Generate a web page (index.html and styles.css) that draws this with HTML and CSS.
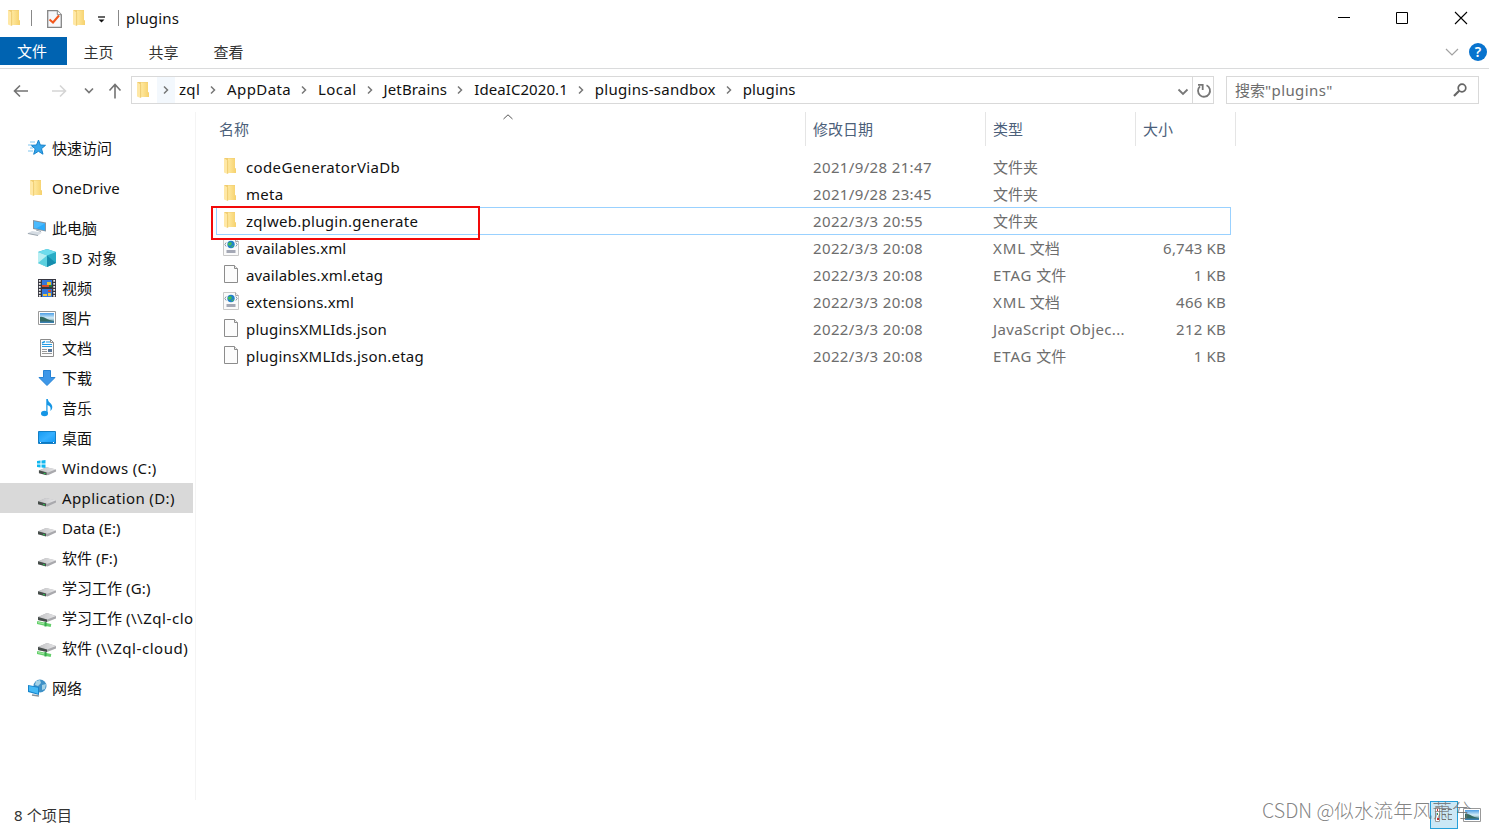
FILE: index.html
```html
<!DOCTYPE html>
<html lang="zh-CN">
<head>
<meta charset="utf-8">
<title>plugins</title>
<link rel="stylesheet" href="styles.css">
</head>
<body>
<svg class="defs" aria-hidden="true">
  <defs>
    <linearGradient id="gold" x1="0" y1="0" x2="1" y2="0"><stop offset="0" stop-color="#ffe9a0"/><stop offset="1" stop-color="#f6d16c"/></linearGradient>
    <linearGradient id="metal" x1="0" y1="0" x2="1" y2="0"><stop offset="0" stop-color="#c4c4c6"/><stop offset="1" stop-color="#e3e3e5"/></linearGradient>
    <linearGradient id="blue" x1="0" y1="0" x2="1" y2="1"><stop offset="0" stop-color="#159bf3"/><stop offset=".5" stop-color="#37b0ff"/><stop offset="1" stop-color="#0c98f6"/></linearGradient>
    <linearGradient id="sky" x1="0" y1="0" x2="0" y2="1"><stop offset="0" stop-color="#4b9ee5"/><stop offset=".5" stop-color="#d5edf7"/><stop offset="1" stop-color="#2c6d83"/></linearGradient>
  </defs>
  <symbol id="folder" viewBox="0 0 14 18"><path d="M1 1h11v10l1 1v4H3z" fill="#f0cc70"/><path d="M5 1.500h7v9.500l1 1v4H5z" fill="url(#gold)"/><path d="M1 1l3.500 2.500V17L1 15.500z" fill="#ffe8a6"/><path d="M4.700 3.500V17" stroke="#eac667" stroke-width=".7"/></symbol>
  <symbol id="chev" viewBox="0 0 8 10"><path d="M2 1.500L5.500 5 2 8.500" fill="none" stroke="#777" stroke-width="1.500"/></symbol>
  <symbol id="drive" viewBox="0 0 20 12"><path d="M1 6.500L9 3l10 2.500v2l-8.500 4L1 9z" fill="#a9a9ad"/><path d="M1 6.300L9 3l10 2.200-8.500 3.500z" fill="url(#metal)"/><path d="M1 6.300l8 2.200v3L1 9.300z" fill="#454c49"/><path d="M6 9.500l2 .5" stroke="#30c854" stroke-width="1.200"/></symbol>
  <symbol id="netdrive" viewBox="0 0 20 16"><path d="M1 5L10 1l9 3v2.500L10 10 1 8z" fill="#a9a9ad"/><path d="M1 5L10 1l9 3-9 3.500z" fill="url(#metal)"/><path d="M1 5l9 2.500V10L1 8z" fill="#454c49"/><path d="M0 10.500l9 2 5 1" stroke="#64cf6b" stroke-width="3" fill="none"/><path d="M1 10.500l7 1.500" stroke="#a4eaa4"/><path d="M8.500 10v4.500" stroke="#36a94b" stroke-width="2"/></symbol>
  <symbol id="page" viewBox="0 0 16 18"><path d="M1.500.5h10l3 3v14h-13z" fill="#fcfcfc" stroke="#8c8c8c"/><path d="M11.500.5v3h3" fill="#eee" stroke="#8c8c8c"/></symbol>
  <symbol id="xml" viewBox="0 0 16 18"><path d="M.5.5h12l3 3v14H.5z" fill="#fafafa" stroke="#c8c8c8"/><path d="M12.500.5v3h3" fill="#eee" stroke="#aaa"/><circle cx="8" cy="6.500" r="3.700" fill="#2281ca"/><path d="M5 5l3-1 1 2-2 2-2-1zm4 3l2-1-1 2-2 .5z" fill="#44bd55"/><path d="M3.200 4.500L1.800 6.500l1.400 2m9.600-4l1.400 2-1.400 2" fill="none" stroke="#8a9dad"/><path d="M3.500 12h9v3h-9z" fill="#a4a8b5"/></symbol>
  <symbol id="picture" viewBox="0 0 18 14"><path d="M.5.5h17v13H.5z" fill="#fff" stroke="#999"/><path d="M2 2h14v10H2z" fill="url(#sky)"/><path d="M2 6c4-1 6 3 14 4v2H2z" fill="#346b62"/><path d="M2 10.500h14V12H2z" fill="#3a80b1"/></symbol>
</svg>

<div class="window">
  <header class="titlebar">
    <div class="quick">
      <svg class="i-folder"><use href="#folder"/></svg>
      <span class="rule q1"></span>
      <svg class="i-check" viewBox="0 0 15 18"><path d="M.7.7h9.600l4 4v12.600H.7z" fill="#f6f7fa" stroke="#858585" stroke-width="1.300"/><path d="M10.300.7v4h4" fill="#fff" stroke="#858585"/><path d="M2.500 9.500l3.500 3 6-7" fill="none" stroke="#f2571d" stroke-width="2"/></svg>
      <svg class="i-folder q2"><use href="#folder"/></svg>
      <svg class="i-more" viewBox="0 0 8 8"><path d="M0 1h7" stroke="#111" stroke-width="1.300"/><path d="M.5 3.500h6l-3 3z" fill="#111"/></svg>
      <span class="rule q3"></span>
      <span class="title">plugins</span>
    </div>
    <div class="controls">
      <svg viewBox="0 0 14 14"><path d="M2 6.500h12" stroke="#000"/></svg>
      <svg viewBox="0 0 14 14"><path d="M1.500 1.500h11v11h-11z" fill="none" stroke="#000"/></svg>
      <svg viewBox="0 0 14 14"><path d="M1 1l12 12M13 1L1 13" stroke="#000" stroke-width="1.100"/></svg>
    </div>
  </header>

  <nav class="tabs">
    <span class="tab file">文件</span><span class="tab">主页</span><span class="tab">共享</span><span class="tab">查看</span>
    <svg class="i-expand" viewBox="0 0 14 8"><path d="M1 1l6 6 6-6" fill="none" stroke="#a2a2a2" stroke-width="1.200"/></svg>
    <span class="help">?</span>
  </nav>

  <div class="addressbar">
    <div class="navbtns">
      <svg class="n1" viewBox="0 0 16 14"><path d="M15 7H1.500M7 1.500L1.500 7 7 12.500" fill="none" stroke="#737373" stroke-width="1.600"/></svg>
      <svg class="n2" viewBox="0 0 16 14"><path d="M1 7h13.500M9 1.500L14.500 7 9 12.500" fill="none" stroke="#d5d5d5" stroke-width="1.600"/></svg>
      <svg class="n3" viewBox="0 0 10 8"><path d="M1 1.500l4 4 4-4" fill="none" stroke="#777" stroke-width="1.700"/></svg>
      <svg class="n4" viewBox="0 0 14 16"><path d="M7 15.500V1.500M1.500 7.500L7 1.500l5.500 6" fill="none" stroke="#737373" stroke-width="1.600"/></svg>
    </div>
    <div class="path">
      <svg class="i-folder"><use href="#folder"/></svg>
      <span class="hot"><svg class="chev"><use href="#chev"/></svg></span>
      <span class="crumb c1">zql</span><svg class="chev"><use href="#chev"/></svg>
      <span class="crumb c2">AppData</span><svg class="chev"><use href="#chev"/></svg>
      <span class="crumb c3">Local</span><svg class="chev"><use href="#chev"/></svg>
      <span class="crumb c4">JetBrains</span><svg class="chev"><use href="#chev"/></svg>
      <span class="crumb c5">IdeaIC2020.1</span><svg class="chev"><use href="#chev"/></svg>
      <span class="crumb c6">plugins-sandbox</span><svg class="chev"><use href="#chev"/></svg>
      <span class="crumb c7">plugins</span>
      <svg class="i-drop" viewBox="0 0 12 8"><path d="M1.500 1.500L6 6l4.500-4.500" fill="none" stroke="#777" stroke-width="1.800"/></svg>
      <span class="refresh"><svg viewBox="0 0 16 16"><path d="M10.500 2.300A6 6 0 1 1 4 3.300M2 1.900h4.700V7" fill="none" stroke="#777" stroke-width="1.800"/></svg></span>
    </div>
    <div class="search"><span>搜索<span class="query">"plugins"</span></span>
      <svg viewBox="0 0 14 14"><circle cx="9" cy="5" r="3.800" fill="none" stroke="#666" stroke-width="1.700"/><path d="M6.200 7.800L1 13" stroke="#666" stroke-width="2.200"/></svg>
    </div>
  </div>

  <main class="body">
    <aside class="side">
      <div class="node root"><svg viewBox="0 0 20 18"><path d="M11.500 1l1.800 5 5.200.3-4 3.400 1.500 5.500-4.600-2.900-4.700 3 1.500-5.500L4 6.300 9.500 6z" fill="#36a5ea" stroke="#1683cc"/><path d="M3 3h5M1 6h4M3 9h3M1 12h5" stroke="#7fc5ef"/></svg>快速访问</div>
      <div class="node root gap"><svg viewBox="0 0 20 18"><use href="#folder" x="2" width="14" height="18"/></svg><span class="one">OneDrive</span></div>
      <div class="node root gap"><svg viewBox="0 0 20 18"><path d="M6 1l13 2.500v9L6 10z" fill="#8794a0"/><path d="M7 2.200l11 2.200v7L7 9z" fill="#2cabfb"/><path d="M7 2.200l11 2.200-9 5L7 9z" fill="#61c5ff" opacity=".6"/><path d="M0 14.500L5 12l10 1.500-4 3z" fill="#d5dce3"/><path d="M1 14.500l10 2M9 11l5 1.500" stroke="#9ba5ae"/></svg>此电脑</div>
      <div class="node"><svg viewBox="0 0 20 18"><path d="M10 0l9 3v11l-9 4-9-4V3z" fill="#29acc5"/><path d="M1 3l9-3 9 3-9 3.500z" fill="#6ddced"/><path d="M1 3l9 3.500V18l-9-4z" fill="#b8eff3"/><path d="M1 14l9-7.500V18z" fill="#5bd0df"/><path d="M19 14l-9-7.500V18z" fill="#168dad"/></svg><span><span class="wide">3D</span> 对象</span></div>
      <div class="node"><svg viewBox="0 0 20 18"><path d="M1 0h18v18H1z" fill="#363640"/><path d="M5 1h10v7H5zm0 9h10v8H5z" fill="#3478dc"/><path d="M2.800 1v17M17.200 1v17" stroke="#eee" stroke-width="1.800" stroke-dasharray="1.700 1.300"/><path d="M10 3h4v4h-4z" fill="#e7c52d"/><path d="M5 6h5v2H5zm5 0h2v2h-2zM11 11h3v2h-3z" fill="#d64d28"/><path d="M6 15h4v2H6zm5-1h3v3h-3z" fill="#f0c63d"/><path d="M12 6h3v2h-3z" fill="#1e7a3b"/></svg>视频</div>
      <div class="node"><svg viewBox="0 0 20 18"><use href="#picture" x="1" y="2" width="18" height="14"/></svg>图片</div>
      <div class="node"><svg viewBox="0 0 20 18"><path d="M3.500.5h10l3 3v14h-13z" fill="#fcfcfc" stroke="#8c8c8c"/><path d="M13.500.5v3h3" fill="none" stroke="#8c8c8c"/><path d="M9 3h4M5 5.500h10M5 7.500h10" stroke="#259de5"/><path d="M5 4l3-1.500" stroke="#259de5" stroke-width="1.500"/><path d="M5 10.500h5M5 12.500h5M5 14.500h10" stroke="#999"/><path d="M11 10h4v3h-4z" fill="#587698"/></svg>文档</div>
      <div class="node"><svg viewBox="0 0 20 18"><path d="M6.500 1.500h7v7h4.500l-8 8-8-8h4.500z" fill="#3d97e8" stroke="#2683d5"/></svg>下载</div>
      <div class="node"><svg viewBox="0 0 20 18"><ellipse cx="7.500" cy="14.500" rx="3.500" ry="2.700" fill="#1596e5"/><path d="M9.300 14V0h1.500c.5 4 4.500 4 4.500 8 0 2-1 3-2 4 1-4-.5-5-2.800-6v8z" fill="#1596e5"/></svg>音乐</div>
      <div class="node"><svg viewBox="0 0 20 18"><path d="M1.500 2.500h17v12h-17z" fill="url(#blue)" stroke="#147fc5"/><path d="M2 13.500h16" stroke="#0b79c4"/><path d="M3 13.500h1m12 0h1" stroke="#fff"/></svg>桌面</div>
      <div class="node"><svg viewBox="0 0 20 18"><use href="#drive" x="1" y="5" width="19" height="12"/><path d="M0 2l3.500-.5v3H0zm4.500-.6l4-.4v3.500h-4zM0 5.500h3.500v3L0 8zm4.500 0h4V9l-4-.5z" fill="#10b7ef"/></svg><span class="win">Windows (C:)</span></div>
      <div class="node on"><svg viewBox="0 0 20 18"><use href="#drive" x="0" y="6" width="20" height="12"/></svg><span class="app">Application (D:)</span></div>
      <div class="node"><svg viewBox="0 0 20 18"><use href="#drive" x="0" y="6" width="20" height="12"/></svg><span>Data (E:)</span></div>
      <div class="node"><svg viewBox="0 0 20 18"><use href="#drive" x="0" y="6" width="20" height="12"/></svg><span>软件 <span class="drv">(F:)</span></span></div>
      <div class="node"><svg viewBox="0 0 20 18"><use href="#drive" x="0" y="6" width="20" height="12"/></svg><span>学习工作 <span class="drv">(G:)</span></span></div>
      <div class="node"><svg viewBox="0 0 20 18"><use href="#netdrive" x="0" y="3" width="20" height="16"/></svg><span>学习工作 <span class="net">(\\Zql-clo</span></span></div>
      <div class="node"><svg viewBox="0 0 20 18"><use href="#netdrive" x="0" y="3" width="20" height="16"/></svg><span>软件 <span class="net">(\\Zql-cloud)</span></span></div>
      <div class="node root gap"><svg viewBox="0 0 20 18"><circle cx="13" cy="7" r="6.500" fill="#3f91c7"/><path d="M9 2l4-1 1 3-3 3-3-1zm6 4l4-1-1 5-3 1z" fill="#a5d2e6"/><path d="M1 6l11 2v8L1 13z" fill="#1684cb"/><path d="M2 7l9 1.700v6L2 12z" fill="#45b9f5"/><path d="M5 16l7 1" stroke="#85919b" stroke-width="1.500"/></svg>网络</div>
    </aside>

    <section class="files">
      <div class="head">
        <div class="hname">名称<svg class="sort" viewBox="0 0 10 6"><path d="M.5 5L5 .8 9.500 5" fill="none" stroke="#555"/></svg></div><div>修改日期</div><div>类型</div><div>大小</div>
      </div>
      <div class="rows">
        <div class="row"><svg class="i-folder"><use href="#folder"/></svg><span class="f1">codeGeneratorViaDb</span><span class="date">2021/9/28 21:47</span><span>文件夹</span><span></span></div>
        <div class="row"><svg class="i-folder"><use href="#folder"/></svg><span class="f2">meta</span><span class="date">2021/9/28 23:45</span><span>文件夹</span><span></span></div>
        <div class="row sel"><svg class="i-folder"><use href="#folder"/></svg><span class="f3">zqlweb.plugin.generate</span><span class="date">2022/3/3 20:55</span><span>文件夹</span><span></span></div>
        <div class="row"><svg><use href="#xml"/></svg><span class="f4">availables.xml</span><span class="date">2022/3/3 20:08</span><span><span class="wide">XML</span> 文档</span><span>6,743 KB</span></div>
        <div class="row"><svg><use href="#page"/></svg><span class="f5">availables.xml.etag</span><span class="date">2022/3/3 20:08</span><span><span class="wide">ETAG</span> 文件</span><span>1 KB</span></div>
        <div class="row"><svg><use href="#xml"/></svg><span class="f6">extensions.xml</span><span class="date">2022/3/3 20:08</span><span><span class="wide">XML</span> 文档</span><span>466 KB</span></div>
        <div class="row"><svg><use href="#page"/></svg><span class="f7">pluginsXMLIds.json</span><span class="date">2022/3/3 20:08</span><span class="js">JavaScript Objec...</span><span>212 KB</span></div>
        <div class="row"><svg><use href="#page"/></svg><span class="f8">pluginsXMLIds.json.etag</span><span class="date">2022/3/3 20:08</span><span><span class="wide">ETAG</span> 文件</span><span>1 KB</span></div>
        <div class="marker"></div>
      </div>
    </section>
  </main>

  <footer class="status">
    <span class="count">8 个项目</span>
    <div class="views">
      <span class="details"><svg viewBox="0 0 20 18"><path d="M1.500 1.500h4v14h-4z" fill="#fff" stroke="#999"/><path d="M3 3h1v2H3zm0 9h2v2H3z" fill="#c43232"/><path d="M3 7h1v2H3z" fill="#395"/><path d="M8 3.500h4m2 0h4M8 8.500h4m2 0h4M8 13.500h4m2 0h4" stroke="#777"/></svg></span>
      <svg class="large"><use href="#picture"/></svg>
    </div>
    <span class="watermark">CSDN @似水流年风萧兮</span>
  </footer>
</div>
</body>
</html>
```
FILE: styles.css
```css
* { box-sizing: border-box; }
body { margin: 0; background: #fff; color: #111; font: 15px/20px "Noto Sans", "Noto Sans CJK SC", sans-serif; overflow: hidden; }
svg { display: block; flex: none; }
.defs { position: absolute; width: 0; height: 0; }
.window { width: 1489px; height: 830px; display: flex; flex-direction: column; white-space: nowrap; }
.i-folder { width: 14px; height: 18px; }

.titlebar { height: 37px; display: flex; justify-content: space-between; align-items: center; padding: 0 21px 1px 7px; }
.quick { display: flex; align-items: center; }
.rule { width: 1px; height: 16px; background: #888; }
.q1 { margin: 0 15px 0 10px; }
.i-check { width: 15px; height: 18px; margin-top: 1px; }
.q2 { margin-left: 10px; }
.i-more { width: 8px; height: 8px; margin: 3px 12px 0 12px; }
.title { margin-left: 7px; letter-spacing: .15px; }
.controls { display: flex; gap: 45px; }
.controls svg { width: 14px; height: 14px; }

.tabs { height: 32px; border-bottom: 1px solid #dadbdc; display: flex; align-items: flex-start; padding-right: 2px; color: #333; }
.tab { width: 65px; height: 28px; line-height: 30px; text-align: center; }
.file { width: 67px; background: #0063b1; color: #fff; line-height: 28px; margin-right: -1px; padding-right: 3px; }
.i-expand { width: 14px; height: 8px; margin: 11px 10px 0 auto; }
.help { width: 18px; height: 18px; margin-top: 6px; border-radius: 50%; background: #0873ce; color: #fff; font-size: 14px; font-weight: 600; line-height: 18px; text-align: center; }

.addressbar { height: 43px; padding: 7px 10px 0 0; display: flex; align-items: flex-start; }
.navbtns { width: 131px; height: 28px; display: flex; align-items: center; padding-left: 13px; padding-top: 2px; }
.n1, .n2 { width: 16px; height: 14px; }
.n2 { margin-left: 22px; }
.n3 { width: 10px; height: 8px; margin-left: 17px; }
.n4 { width: 14px; height: 16px; margin-left: 14px; margin-top: 0; }
.path { width: 1083px; height: 28px; border: 1px solid #d9d9d9; display: flex; align-items: center; padding-left: 4px; }
.hot { width: 18px; height: 26px; margin: 0 4px 0 7px; background: #f3f8fd; display: flex; align-items: center; justify-content: center; }
.chev { width: 8px; height: 10px; margin: 0 10px 0 9px; }
.hot .chev { margin: 0; }
.crumb { padding-bottom: 2px; }
.c1 { letter-spacing: .3px; }
.c2 { letter-spacing: .4px; }
.c3 { letter-spacing: .4px; }
.c4 { letter-spacing: .15px; }
.c5 { letter-spacing: .08px; }
.c6 { letter-spacing: .27px; }
.c7 { letter-spacing: .15px; }
.i-drop { width: 12px; height: 8px; margin: 3px 3px 0 auto; }
.refresh { width: 21px; height: 26px; border-left: 1px solid #d9d9d9; display: flex; align-items: center; justify-content: center; }
.refresh svg { width: 16px; height: 16px; margin: 1px 0 0 1px; }
.search { width: 253px; height: 28px; margin-left: 12px; padding: 0 11px 0 8px; border: 1px solid #d9d9d9; color: #6d6d6d; display: flex; align-items: center; justify-content: space-between; }
.query { letter-spacing: .4px; }
.search svg { width: 14px; height: 14px; }

.body { height: 688px; display: flex; }
.side { width: 196px; border-right: 1px solid #f4f4f4; padding: 21px 2px 0 0; }
.node { height: 30px; display: flex; align-items: center; gap: 5px; padding-left: 37px; overflow: hidden; }
.node svg { width: 20px; height: 18px; }
.root { padding-left: 27px; }
.gap { margin-top: 10px; }
.on { background: #d9d9d9; }
.one { letter-spacing: .18px; }
.win { letter-spacing: .35px; }
.app { letter-spacing: .37px; }
.drv { letter-spacing: .25px; }
.net { letter-spacing: .55px; }
.wide { letter-spacing: .9px; }

.files { width: 1040px; }
.head { height: 33px; margin-left: 15px; display: grid; grid-template-columns: 595px 180px 150px 100px; color: #4c607a; }
.head div { border-right: 1px solid #e5e5e5; padding-left: 7px; line-height: 34px; }
.head .hname { position: relative; padding-left: 8px; }
.sort { position: absolute; width: 10px; height: 6px; left: 292px; top: 2px; }
.rows { margin: 9px 0 0 20px; position: relative; }
.row { width: 1015px; height: 27px; display: grid; grid-template-columns: 30px 567px 180px 142px 91px; align-items: center; color: #6d6d6d; }
.row svg { width: 16px; height: 18px; margin: -4px 0 0 7px; }
.row .i-folder { width: 14px; margin-top: -3px; }
.row > span { padding-bottom: 2px; }
.row > span:nth-child(2) { color: #111; }
.row > span:last-child { text-align: right; letter-spacing: .2px; }
.sel { height: 28px; margin: -1px 0 0; border: 1px solid #99d1ff; grid-template-columns: 29px 567px 180px 142px 90px; }
.sel > span { padding-bottom: 0; }
.sel .i-folder { margin-left: 6px; }
.marker { position: absolute; left: -5px; top: 52px; width: 269px; height: 34px; border: 2px solid #f20a0a; }
.date { letter-spacing: .36px; }
.f1 { letter-spacing: .37px; }
.f2 { letter-spacing: .25px; }
.f3 { letter-spacing: .28px; }
.f4 { letter-spacing: .07px; }
.f5 { letter-spacing: .12px; }
.f6 { letter-spacing: .17px; }
.f7 { letter-spacing: .22px; }
.f8 { letter-spacing: .23px; }
.js { letter-spacing: .36px; }

.status { height: 30px; position: relative; display: flex; align-items: center; justify-content: space-between; padding: 0 8px 0 14px; color: #333; }
.count { letter-spacing: .1px; }
.views { display: flex; align-items: center; gap: 5px; }
.details { width: 28px; height: 28px; border: 1px solid #26a0da; background: #cbe8f6; display: flex; align-items: center; justify-content: center; }
.details svg { width: 20px; height: 18px; }
.large { width: 18px; height: 14px; }
.watermark { position: absolute; left: 1262px; top: -1px; font: 300 19.600px/22px "Noto Sans CJK SC", sans-serif; color: rgba(110, 110, 110, .85); }
```
